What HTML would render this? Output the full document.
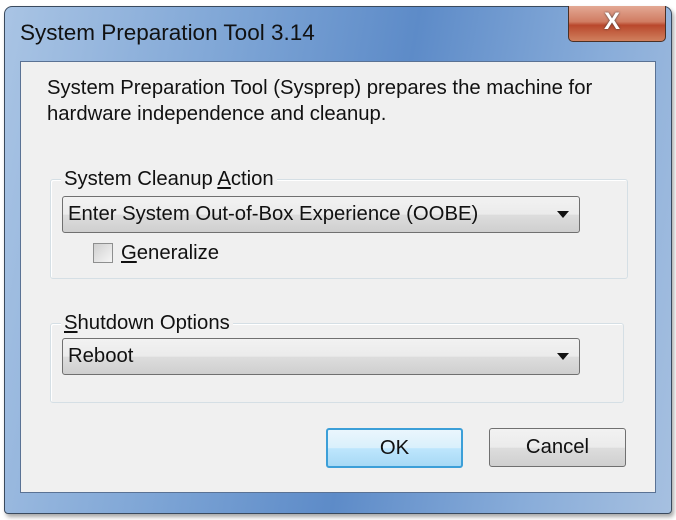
<!DOCTYPE html>
<html><head><style>
body{margin:0;width:676px;height:520px;background:#fff;font-family:"Liberation Sans",sans-serif;position:relative;overflow:hidden}
.abs{position:absolute}
.win{left:4px;top:6px;width:666px;height:506px;border:1px solid #3a4a5e;border-radius:8px 8px 4px 4px;background:linear-gradient(100deg,#a9c4e4 0%,#7fa6d6 30%,#5d8bc8 55%,#88acd9 80%,#a6c0e0 100%);box-shadow:2px 3px 4px rgba(0,0,0,.35)}
.client{left:20px;top:61px;width:634px;height:430px;background:#f0f0f0;border:1px solid #5a7294}
.t{font-size:20.3px;color:#111;white-space:nowrap}
.grp{border:1px solid #d5dfe5;border-radius:3px;box-shadow:inset 1px 1px 0 #fff}
.lbl{background:#f0f0f0;padding:0 3px}
.combo{border:1px solid #707070;border-radius:3px;background:linear-gradient(#f2f2f2 0%,#ebebeb 50%,#dddddd 51%,#cfcfcf 100%)}
.arr{width:0;height:0;border-left:6px solid transparent;border-right:6px solid transparent;border-top:7px solid #111}
.btn{border:1px solid #707070;border-radius:3px;background:linear-gradient(#f2f2f2 0%,#ebebeb 50%,#dddddd 51%,#cfcfcf 100%);text-align:center;line-height:36px}
</style></head><body>
<div class="abs win"></div>
<div class="abs t" style="left:20px;top:20px;font-size:22.5px;color:#111">System Preparation Tool 3.14</div>
<div class="abs" style="left:568px;top:6px;width:96px;height:35px;border:1px solid #4a3026;border-top:none;border-radius:0 0 5px 5px;background:linear-gradient(#e3a894 0%,#d07c62 45%,#b9482c 55%,#d0805e 100%)"></div>
<div class="abs" style="left:604px;top:8px;color:#fff;font-size:24px;font-weight:bold;text-shadow:0 0 2px #333">X</div>
<div class="abs client"></div>
<div class="abs t" style="left:47px;top:77px">System Preparation Tool (Sysprep) prepares the machine for</div>
<div class="abs t" style="left:47px;top:103px">hardware independence and cleanup.</div>
<div class="abs grp" style="left:50px;top:179px;width:576px;height:98px"></div>
<div class="abs t lbl" style="left:61px;top:168px">System Cleanup <u>A</u>ction</div>
<div class="abs combo" style="left:62px;top:196px;width:516px;height:35px"></div>
<div class="abs t" style="left:68px;top:203px">Enter System Out-of-Box Experience (OOBE)</div>
<div class="abs arr" style="left:557px;top:211px"></div>
<div class="abs" style="left:93px;top:243px;width:18px;height:18px;border:1px solid #8e8f8f;background:linear-gradient(135deg,#d0d0d0,#f5f5f5)"></div>
<div class="abs t" style="left:121px;top:242px"><u>G</u>eneralize</div>
<div class="abs grp" style="left:50px;top:323px;width:572px;height:78px"></div>
<div class="abs t lbl" style="left:61px;top:312px"><u>S</u>hutdown Options</div>
<div class="abs combo" style="left:62px;top:338px;width:516px;height:35px"></div>
<div class="abs t" style="left:68px;top:345px">Reboot</div>
<div class="abs arr" style="left:557px;top:353px"></div>
<div class="abs btn t" style="left:326px;top:428px;width:133px;height:36px;border:2px solid #3c9fd8;background:linear-gradient(#eaf6fd 0%,#d9f0fc 50%,#bee6fd 51%,#a7d9f5 100%)">OK</div>
<div class="abs btn t" style="left:489px;top:428px;width:135px;height:37px">Cancel</div>
</body></html>
